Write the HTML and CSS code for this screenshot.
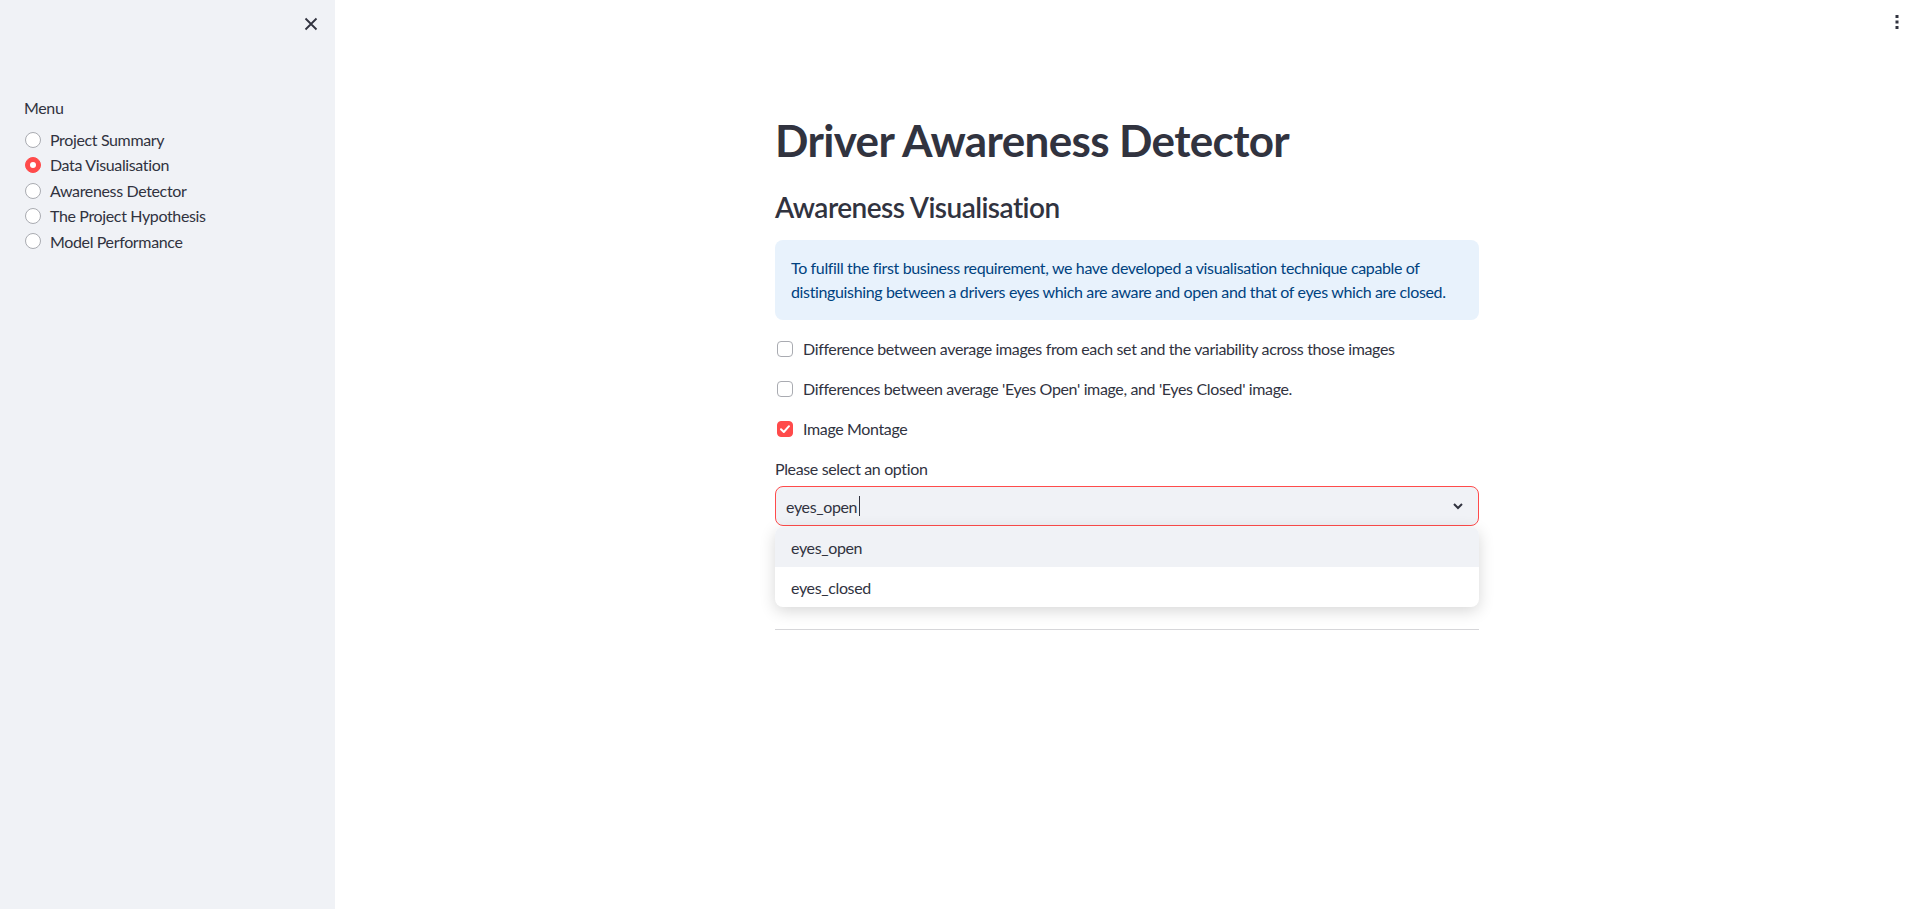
FILE: index.html
```html
<!DOCTYPE html>
<html lang="en">
<head>
<meta charset="utf-8">
<title>Driver Awareness Detector</title>
<link rel="stylesheet" href="styles.css">
</head>
<body>
<div class="app">
  <aside class="sidebar">
    <div class="sidebar-head">
      <button class="icon-btn" aria-label="Close sidebar">
        <svg width="16" height="16" viewBox="0 0 16 16"><path d="M2.5 2.5 L13.5 13.5 M13.5 2.5 L2.5 13.5" stroke="#31333f" stroke-width="1.8" fill="none"/></svg>
      </button>
    </div>
    <div class="sidebar-content">
      <div class="widget-label">Menu</div>
      <div class="radio-group">
        <label class="radio"><span class="radio-dot"></span><span>Project Summary</span></label>
        <label class="radio is-on"><span class="radio-dot"></span><span>Data Visualisation</span></label>
        <label class="radio"><span class="radio-dot"></span><span>Awareness Detector</span></label>
        <label class="radio"><span class="radio-dot"></span><span>The Project Hypothesis</span></label>
        <label class="radio"><span class="radio-dot"></span><span>Model Performance</span></label>
      </div>
    </div>
  </aside>
  <main class="main">
    <header class="topbar">
      <button class="icon-btn" aria-label="Main menu">
        <svg width="16" height="16" viewBox="0 0 16 16"><rect x="6.5" y="1" width="3" height="3" fill="#31333f"/><rect x="6.5" y="6.5" width="3" height="3" fill="#31333f"/><rect x="6.5" y="12" width="3" height="3" fill="#31333f"/></svg>
      </button>
    </header>
    <div class="block">
      <h1 class="title">Driver Awareness Detector</h1>
      <h3 class="subtitle">Awareness Visualisation</h3>
      <div class="info">To fulfill the first business requirement, we have developed a visualisation technique capable of distinguishing between a drivers eyes which are aware and open and that of eyes which are closed.</div>
      <div class="checks">
        <label class="check"><span class="box"></span><span>Difference between average images from each set and the variability across those images</span></label>
        <label class="check"><span class="box"></span><span>Differences between average 'Eyes Open' image, and 'Eyes Closed' image.</span></label>
        <label class="check is-on"><span class="box"><svg width="12" height="12" viewBox="0 0 12 12"><path d="M2 6.2 L4.8 9 L10 3.2" stroke="#fff" stroke-width="2" fill="none" stroke-linecap="round" stroke-linejoin="round"/></svg></span><span>Image Montage</span></label>
      </div>
      <div class="select-label">Please select an option</div>
      <div class="select">
        <div class="select-control">
          <span class="select-value">eyes_open</span><span class="caret"></span>
          <svg class="chevron" width="16" height="16" viewBox="0 0 16 16"><path d="M4 6 L8 10 L12 6" stroke="#31333f" stroke-width="2" fill="none"/></svg>
        </div>
        <ul class="menu">
          <li class="menu-item is-active">eyes_open</li>
          <li class="menu-item">eyes_closed</li>
        </ul>
      </div>
      <hr class="rule">
    </div>
  </main>
</div>
</body>
</html>
```
FILE: styles.css
```css
* { box-sizing: border-box; }
html, body { margin: 0; padding: 0; }
body {
  font-family: Lato, "Liberation Sans", sans-serif;
  color: #31333f;
  background: #fff;
  letter-spacing: -0.36px;
  width: 1919px;
  height: 909px;
  overflow: hidden;
}
.app { display: flex; height: 909px; }
.icon-btn {
  border: 0; background: transparent; padding: 0; margin: 0;
  width: 16px; height: 16px; display: block; cursor: pointer;
}
.icon-btn svg { display: block; }

/* Sidebar */
.sidebar {
  width: 335px;
  flex: none;
  background: #f0f2f6;
  display: flex;
  flex-direction: column;
}
.sidebar-head {
  display: flex;
  justify-content: flex-end;
  padding: 16px 16px 0 0;
}
.sidebar-content { padding: 64px 24px 0 24px; }
.widget-label { font-size: 16px; line-height: 24px; }
.radio-group { margin-top: 7px; display: flex; flex-direction: column; }
.radio {
  display: flex; align-items: center; gap: 9px;
  font-size: 16px; line-height: 25.4px;
}
.radio-dot {
  width: 16px; height: 16px; margin-left: 1px;
  border-radius: 50%;
  border: 1px solid #a9abb1;
  background: #fff;
  flex: none;
  display: flex; align-items: center; justify-content: center;
}
.radio.is-on .radio-dot { background: #ff4b4b; border-color: #ff4b4b; }
.radio.is-on .radio-dot::after {
  content: ""; width: 6px; height: 6px; border-radius: 50%; background: #fff;
}

/* Main */
.main { flex: 1; display: flex; flex-direction: column; }
.topbar {
  height: 46px;
  display: flex;
  justify-content: flex-end;
  align-items: flex-start;
  padding: 14px 14px 0 0;
}
.block { width: 704px; margin: 0 auto; padding-top: 50px; display: flex; flex-direction: column; }
.title {
  margin: 0; padding-top: 18px;
  font-size: 44px; line-height: 52.8px; font-weight: 700;
  letter-spacing: -0.64px;
}
.subtitle {
  margin: 24px 0 0 0;
  font-size: 28px; line-height: 33.6px; font-weight: 600;
  letter-spacing: -0.54px;
}
.info {
  margin-top: 16px;
  padding: 16px;
  background: #e8f2fc;
  color: #004280;
  border-radius: 8px;
  font-size: 16px; line-height: 24px;
}
.checks { margin-top: 17px; display: flex; flex-direction: column; gap: 16px; }
.check { display: flex; align-items: center; gap: 10px; font-size: 16px; line-height: 24px; }
.box {
  width: 16px; height: 16px; margin-left: 2px; flex: none;
  border: 1px solid #a9abb1; border-radius: 4px; background: #fff;
  display: flex; align-items: center; justify-content: center;
}
.check.is-on .box { background: #ff4b4b; border-color: #ff4b4b; }
.check.is-on .box svg { display: block; }
.select-label { margin-top: 16px; font-size: 16px; line-height: 24px; }
.select { position: relative; margin-top: 5px; }
.select-control {
  height: 40px;
  border: 1px solid #ff4b4b;
  border-radius: 8px;
  background: #f0f2f6;
  display: flex; align-items: center;
  padding: 0 12px 0 10px;
  font-size: 16px;
}
.caret { width: 1px; height: 20px; background: #31333f; margin-left: 2px; }
.chevron { margin-left: auto; }
.menu {
  position: absolute; left: 0; right: 0; top: 41px;
  margin: 0; padding: 0; list-style: none;
  background: #fff;
  border-radius: 8px;
  box-shadow: 0 4px 16px rgba(0,0,0,0.16);
  overflow: hidden;
  z-index: 5;
}
.menu-item { height: 40px; display: flex; align-items: center; padding-left: 16px; font-size: 16px; }
.menu-item.is-active { background: #f0f2f6; }
.rule { margin: 103px 0 0 0; border: 0; height: 1px; background: #d6d6d9; }
```
